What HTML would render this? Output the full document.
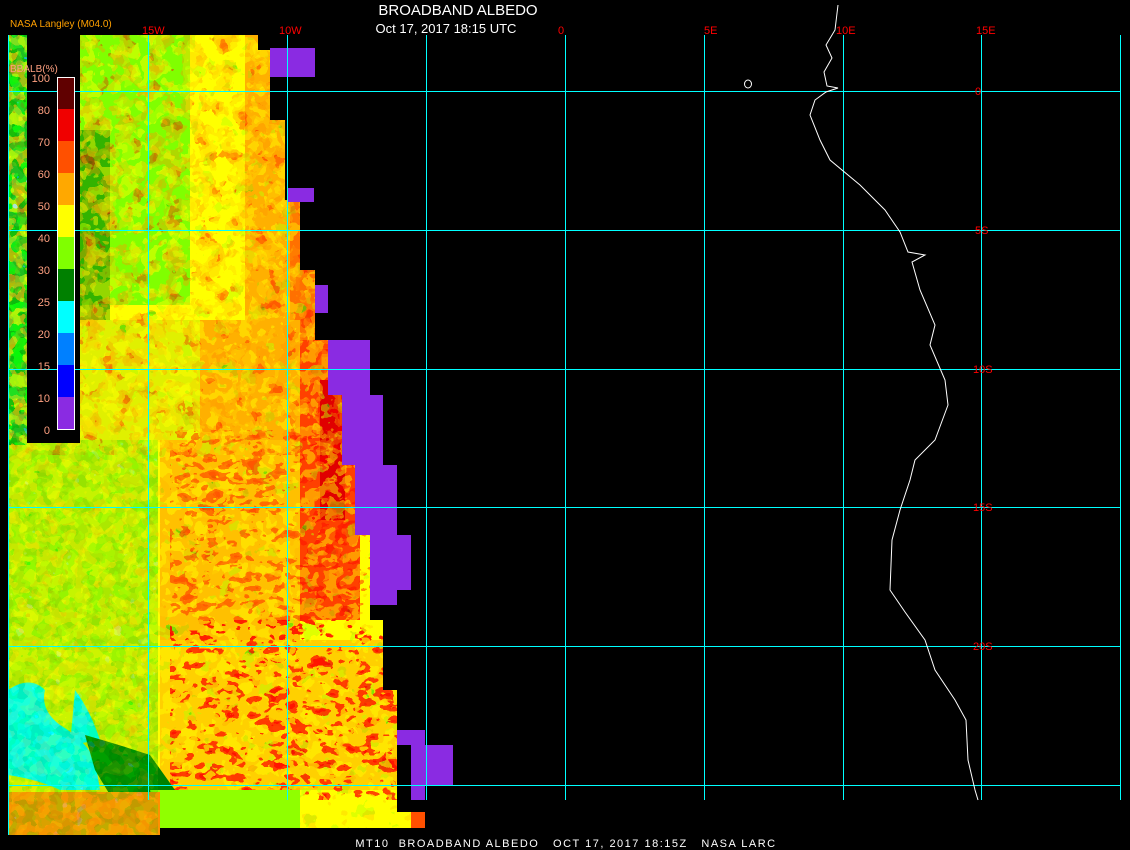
<!DOCTYPE html>
<html><head><meta charset="utf-8"><style>
html,body{margin:0;padding:0;background:#000;width:1130px;height:850px;overflow:hidden}
svg{display:block}
text{font-family:"Liberation Sans",sans-serif}
</style></head><body>
<svg width="1130" height="850" viewBox="0 0 1130 850" xmlns="http://www.w3.org/2000/svg">
<defs>
<clipPath id="dc">
<path d="M8,35 H258 V50 H270 V120 H285 V200 H300 V270 H315 V340 H328 V395 H342 V465 H355 V535 H370 V620 H383 V690 H397 V812 H425 V828 H160 V835 H8 Z"/>
</clipPath>
<filter id="n1" x="0" y="0" width="100%" height="100%">
<feTurbulence type="fractalNoise" baseFrequency="0.06" numOctaves="3" seed="4"/>
<feComponentTransfer>
<feFuncR type="discrete" tableValues="0.5 1 1 1 1 0.4"/>
<feFuncG type="discrete" tableValues="1 1 0.65 0.3 0 0"/>
<feFuncB type="discrete" tableValues="0 0 0 0 0 0"/>
<feFuncA type="discrete" tableValues="0.8 0 0 0.6 0.8 0.9"/>
</feComponentTransfer>
</filter>
<filter id="n2" x="0" y="0" width="100%" height="100%">
<feTurbulence type="fractalNoise" baseFrequency="0.07" numOctaves="2" seed="9"/>
<feComponentTransfer>
<feFuncR type="discrete" tableValues="0.4 0.8 1 1 0.5 0.4"/>
<feFuncG type="discrete" tableValues="0 0 0.5 1 1 0"/>
<feFuncB type="discrete" tableValues="0 0 0 0 0 0"/>
<feFuncA type="discrete" tableValues="1 0.9 0 0 0.7 1"/>
</feComponentTransfer>
</filter>
<filter id="n5" x="0" y="0" width="100%" height="100%">
<feTurbulence type="fractalNoise" baseFrequency="0.045 0.07" numOctaves="3" seed="13"/>
<feComponentTransfer>
<feFuncR type="discrete" tableValues="0.4 0.85 1 1 1 1 0.9 0.4"/>
<feFuncG type="discrete" tableValues="0 0 0.4 0 0 0.5 0 0"/>
<feFuncB type="discrete" tableValues="0 0 0 0 0 0 0 0"/>
<feFuncA type="discrete" tableValues="1 1 0.8 0 0 0.8 1 1"/>
</feComponentTransfer>
</filter>
<filter id="n3" x="0" y="0" width="100%" height="100%">
<feTurbulence type="fractalNoise" baseFrequency="0.08" numOctaves="2" seed="2"/>
<feComponentTransfer>
<feFuncR type="discrete" tableValues="0 0 0.5 1"/>
<feFuncG type="discrete" tableValues="1 0.5 1 1"/>
<feFuncB type="discrete" tableValues="1 0 0 0"/>
<feFuncA type="discrete" tableValues="0.9 0.8 0.5 0.7"/>
</feComponentTransfer>
</filter>
<filter id="n4" x="0" y="0" width="100%" height="100%">
<feTurbulence type="fractalNoise" baseFrequency="0.05" numOctaves="3" seed="7"/>
<feComponentTransfer>
<feFuncR type="discrete" tableValues="0 0.5 1 1 1"/>
<feFuncG type="discrete" tableValues="0.5 1 1 0.65 0.4"/>
<feFuncB type="discrete" tableValues="0 0 0 0 0"/>
<feFuncA type="discrete" tableValues="0.8 0.8 0 0.8 0.8"/>
</feComponentTransfer>
</filter>
</defs>
<g clip-path="url(#dc)">
<rect x="8" y="35" width="420" height="800" fill="#ffff00"/>
<rect x="80" y="35" width="110" height="270" fill="#80ff00"/>
<rect x="80" y="130" width="30" height="190" fill="#008000" opacity="0.6"/>
<rect x="245" y="35" width="60" height="300" fill="#ffb000"/>
<rect x="290" y="200" width="30" height="140" fill="#ff7000"/>
<rect x="80" y="320" width="120" height="120" fill="#e0f000"/>
<rect x="200" y="320" width="100" height="120" fill="#ffb000"/>
<rect x="300" y="340" width="60" height="280" fill="#ff4000"/>
<rect x="320" y="380" width="25" height="140" fill="#e00000"/>
<rect x="8" y="440" width="150" height="210" fill="#c8f000"/>
<rect x="160" y="440" width="140" height="200" fill="#ffc000"/>
<rect x="160" y="640" width="240" height="150" fill="#ffd000"/>
<rect x="8" y="650" width="150" height="150" fill="#d0f000"/>
<rect x="8" y="35" width="440" height="800" filter="url(#n4)" opacity="0.6"/>
<rect x="170" y="430" width="250" height="210" filter="url(#n5)" opacity="0.55"/>
<rect x="170" y="620" width="250" height="180" filter="url(#n5)" opacity="0.9"/>
<path d="M8,690 Q30,675 45,690 Q40,710 60,725 Q85,740 95,760 L100,790 L60,790 Q40,780 8,775 Z" fill="#00ffff"/>
<path d="M75,690 Q90,710 100,740 L70,745 Z" fill="#00ffff"/>
<path d="M85,735 Q120,745 150,755 L175,790 L110,795 L95,770 Z" fill="#008000"/>
<path d="M150,790 L300,790 L300,828 L160,828 Z" fill="#90ff00"/>
<rect x="8" y="792" width="152" height="44" fill="#ff9000"/>
<rect x="8" y="35" width="19" height="410" fill="#40c040"/>
<rect x="8" y="35" width="440" height="420" filter="url(#n1)" opacity="0.6"/>
<rect x="8" y="35" width="19" height="410" filter="url(#n3)"/>
<rect x="8" y="440" width="150" height="400" filter="url(#n3)" opacity="0.3"/>
</g>
<rect x="27" y="35" width="53" height="408" fill="#000"/>
<g fill="#8a2be2">
<rect x="270" y="48" width="45" height="29"/>
<rect x="287" y="188" width="27" height="14"/>
<rect x="315" y="285" width="13" height="28"/>
<rect x="328" y="340" width="42" height="55"/>
<rect x="342" y="395" width="41" height="70"/>
<rect x="355" y="465" width="42" height="70"/>
<rect x="370" y="535" width="41" height="55"/>
<rect x="370" y="590" width="27" height="15"/>
<rect x="397" y="730" width="28" height="15"/>
<rect x="411" y="745" width="42" height="40"/>
<rect x="411" y="785" width="14" height="15"/>
</g>
<rect x="411" y="812" width="14" height="16" fill="#ff5000"/>
<g fill="#00ffff" shape-rendering="crispEdges">
<rect x="8" y="35" width="1" height="800"/>
<rect x="148" y="35" width="1" height="765"/>
<rect x="287" y="35" width="1" height="765"/>
<rect x="426" y="35" width="1" height="765"/>
<rect x="565" y="35" width="1" height="765"/>
<rect x="704" y="35" width="1" height="765"/>
<rect x="843" y="35" width="1" height="765"/>
<rect x="981" y="35" width="1" height="765"/>
<rect x="1120" y="35" width="1" height="765"/>
<rect x="8" y="91" width="1112" height="1"/>
<rect x="8" y="230" width="1112" height="1"/>
<rect x="8" y="369" width="1112" height="1"/>
<rect x="8" y="507" width="1112" height="1"/>
<rect x="8" y="646" width="1112" height="1"/>
<rect x="8" y="785" width="1112" height="1"/>
</g>
<polyline fill="none" stroke="#fff" stroke-width="1" points="838,5 835,30 826,45 832,58 824,72 827,86 838,88 826,92 815,100 810,115 820,140 830,160 860,185 885,210 900,232 908,252 925,255 912,262 920,290 935,325 930,345 945,380 948,405 935,440 915,460 910,480 900,510 892,540 890,590 905,612 925,640 935,670 955,700 966,720 968,760 975,790 978,800"/>
<ellipse cx="748" cy="84" rx="3.5" ry="4" fill="none" stroke="#fff"/>
<g fill="#ff0000" font-size="11">
<text x="142" y="34">15W</text>
<text x="279" y="34">10W</text>
<text x="558" y="34">0</text>
<text x="704" y="34">5E</text>
<text x="836" y="34">10E</text>
<text x="976" y="34">15E</text>
<text x="975" y="95">0</text>
<text x="975" y="234">5S</text>
<text x="973" y="373">10S</text>
<text x="973" y="511">15S</text>
<text x="973" y="650">20S</text>
</g>
<text x="458" y="15" fill="#fff" font-size="15" text-anchor="middle">BROADBAND ALBEDO</text>
<text x="446" y="33" fill="#fff" font-size="13" text-anchor="middle">Oct 17, 2017 18:15 UTC</text>
<text x="10" y="27" fill="#ffa000" font-size="10">NASA Langley (M04.0)</text>
<text x="10" y="72" fill="#ffa080" font-size="10">BBALB(%)</text>
<g>
<rect x="57" y="77" width="18" height="32" fill="#600000"/>
<rect x="57" y="109" width="18" height="32" fill="#f00000"/>
<rect x="57" y="141" width="18" height="32" fill="#ff5000"/>
<rect x="57" y="173" width="18" height="32" fill="#ffa800"/>
<rect x="57" y="205" width="18" height="32" fill="#ffff00"/>
<rect x="57" y="237" width="18" height="32" fill="#80ff00"/>
<rect x="57" y="269" width="18" height="32" fill="#008000"/>
<rect x="57" y="301" width="18" height="32" fill="#00ffff"/>
<rect x="57" y="333" width="18" height="32" fill="#0080ff"/>
<rect x="57" y="365" width="18" height="32" fill="#0000ff"/>
<rect x="57" y="397" width="18" height="32" fill="#8a2be2"/>
<rect x="57.5" y="77.5" width="17" height="352" fill="none" stroke="#fff"/>
</g>
<g fill="#ffa080" font-size="11" text-anchor="end">
<text x="50" y="82">100</text>
<text x="50" y="114">80</text>
<text x="50" y="146">70</text>
<text x="50" y="178">60</text>
<text x="50" y="210">50</text>
<text x="50" y="242">40</text>
<text x="50" y="274">30</text>
<text x="50" y="306">25</text>
<text x="50" y="338">20</text>
<text x="50" y="370">15</text>
<text x="50" y="402">10</text>
<text x="50" y="434">0</text>
</g>
<text x="566" y="847" fill="#fff" font-size="11" text-anchor="middle" font-family="Liberation Mono,monospace" letter-spacing="1.5" xml:space="preserve">MT10  BROADBAND ALBEDO   OCT 17, 2017 18:15Z   NASA LARC</text>
</svg>
</body></html>
